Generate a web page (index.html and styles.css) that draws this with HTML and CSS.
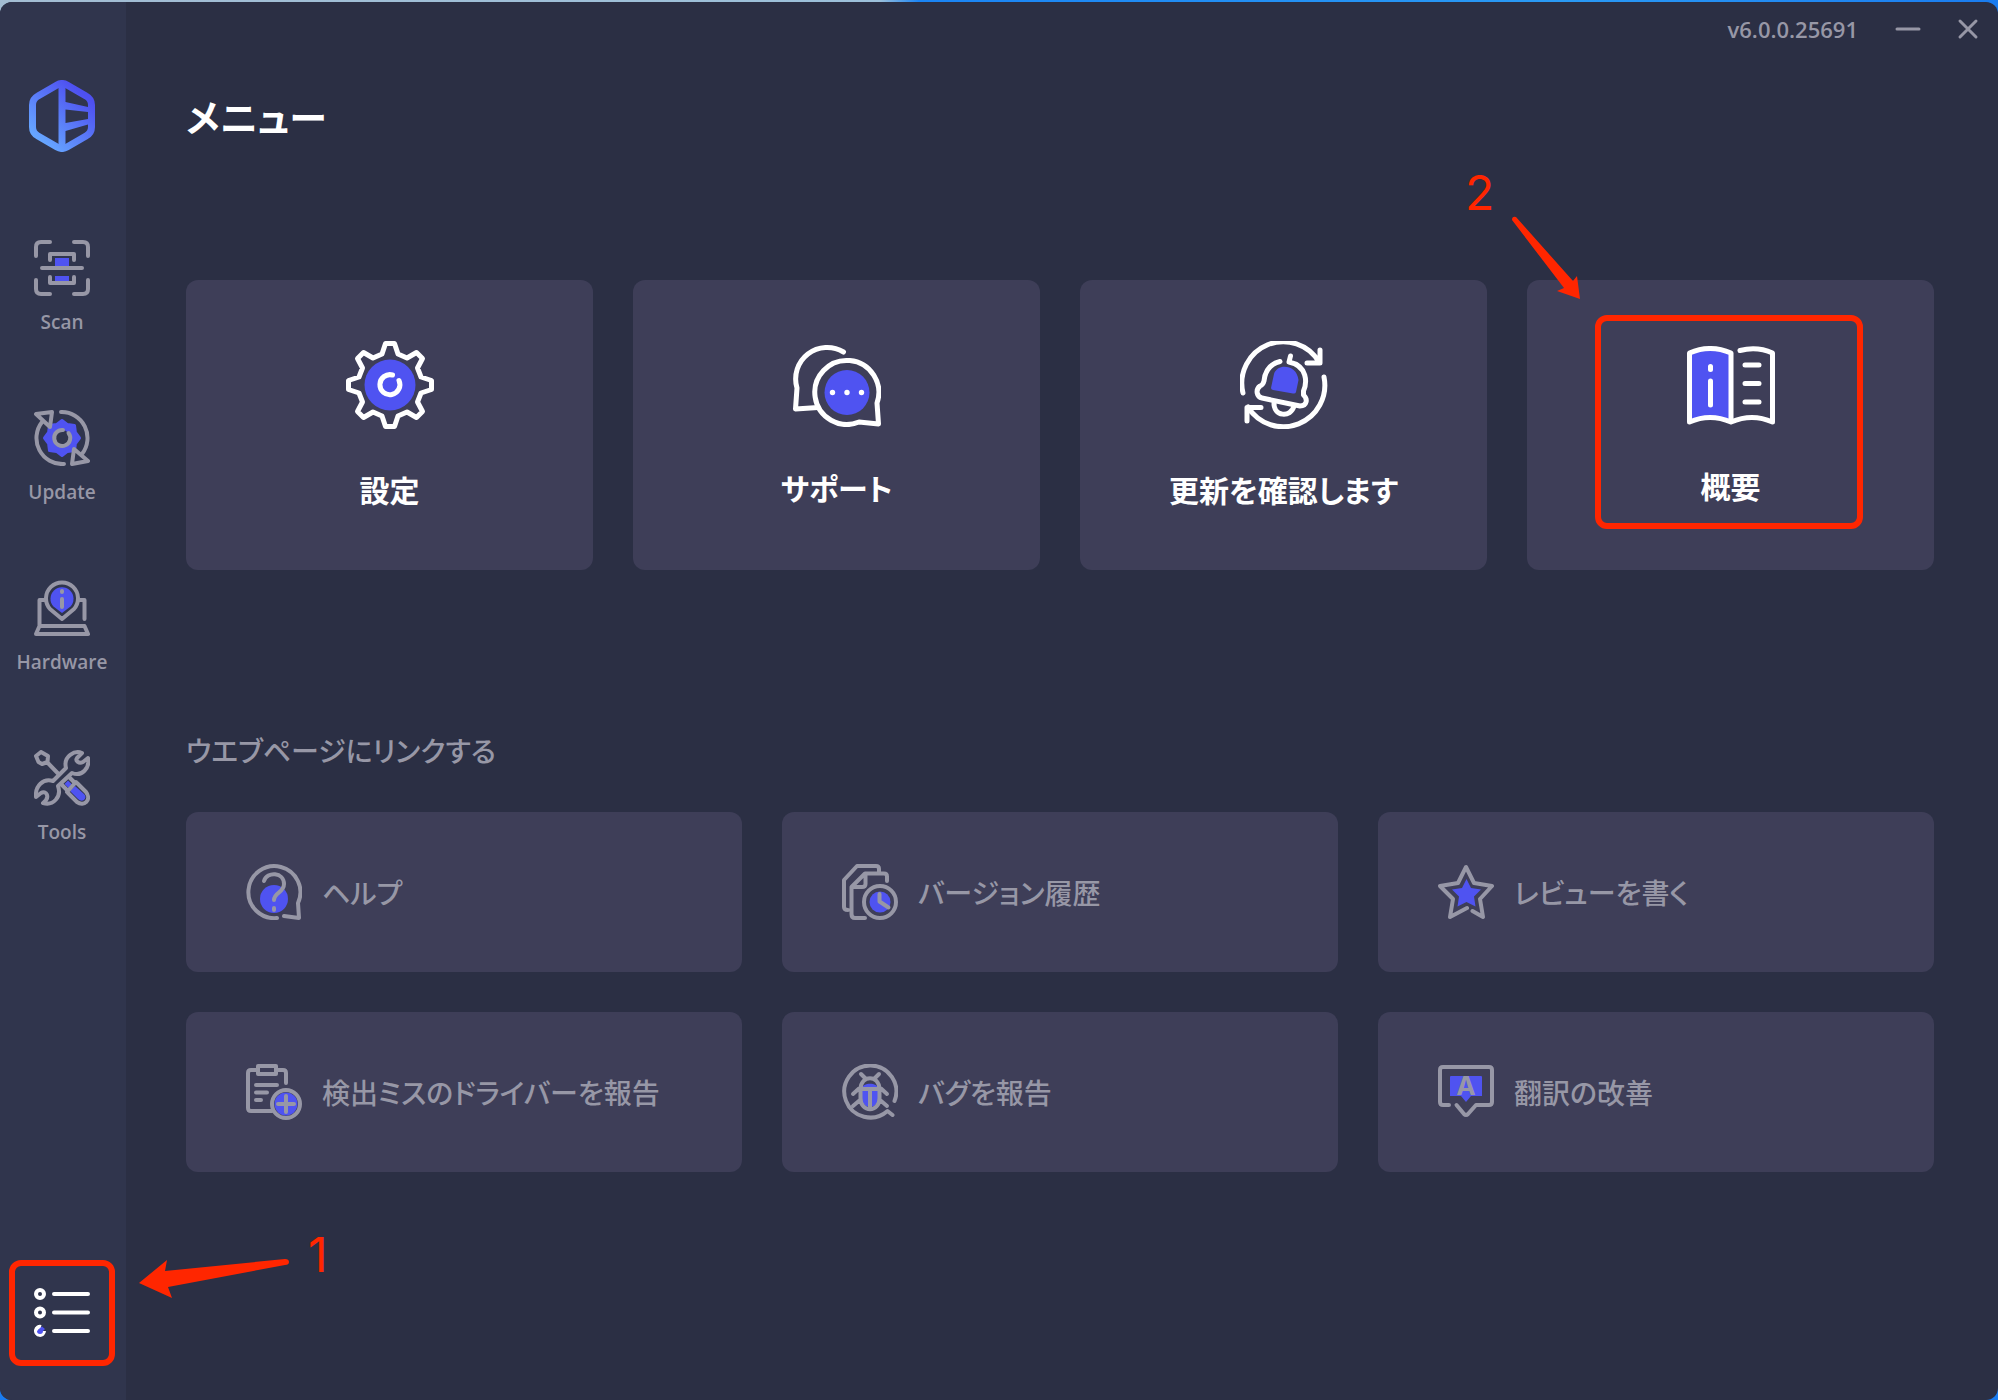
FILE: index.html
```html
<!DOCTYPE html>
<html lang="ja">
<head>
  <meta charset="UTF-8">
  <title>メニュー</title>
  <link rel="stylesheet" href="styles.css">
</head>
<body>
  <div class="window">
    <aside class="sidebar">
      <svg class="logo" viewBox="0 0 66 72">
        <defs>
          <linearGradient id="logo-fill" gradientUnits="userSpaceOnUse" x1="12" y1="60" x2="54" y2="14">
            <stop offset="0" stop-color="#66a5ff"/>
            <stop offset="1" stop-color="#4e50f0"/>
          </linearGradient>
        </defs>
        <path d="M28 5Q33 2 38 5L57 16Q62.500 19 62.500 25V47Q62.500 53 57 56L38 67Q33 70 28 67L9 56Q3.500 53 3.500 47V25Q3.500 19 9 16Z" fill="none" stroke="url(#logo-fill)" stroke-width="7"/>
        <path d="M29.500 4H36.500V22L59 27V32L36.500 29.500V43L59 39V44.500L36.500 51V68H29.500Z" fill="url(#logo-fill)"/>
      </svg>

      <nav class="nav">
        <a class="nav-item" href="#scan">
          <svg class="icon" viewBox="0 0 56 56">
            <path class="fill" d="M21 18H35V27H21ZM21 36H35V42H21Z"/>
            <path d="M2 16V7Q2 2 7 2H16M40 2H49Q54 2 54 7V16M2 40V49Q2 54 7 54H16M40 54H49Q54 54 54 49V40M16 20V14H40V20M16 37V43H40V37M8 28H48"/>
          </svg>
          <span>Scan</span>
        </a>
        <a class="nav-item" href="#update">
          <svg class="icon" viewBox="0 0 56 56">
            <path class="gear" d="M28 10.500L33.500 14.600L40.500 15.500L41.400 22.500L45.500 28L41.400 33.500L40.500 40.500L33.500 41.400L28 45.500L22.500 41.400L15.500 40.500L14.600 33.500L10.500 28L14.600 22.500L15.500 15.500L22.500 14.600Z"/>
            <circle class="hole" cx="28" cy="28" r="8"/>
            <path d="M34.500 23A8 8 0 1 1 29 20"/>
            <path d="M27 2A26 26 0 0 1 48 44M30 54A26 26 0 0 1 8 12M2 4L18 2L16 17ZM40 39L54 51L38 54Z"/>
          </svg>
          <span>Update</span>
        </a>
        <a class="nav-item" href="#hardware">
          <svg class="icon" viewBox="0 0 56 56">
            <path class="fill" d="M28 33L19.500 26.500A11.500 11.500 0 1 1 36.500 26.500Z"/>
            <path d="M28 39L16 29A16 16 0 1 1 40 29ZM28 11V12M28 19V27M11 20H5.500V46M45 20H50.500V39M5.500 46H50.500L54 54H2Z"/>
          </svg>
          <span>Hardware</span>
        </a>
        <a class="nav-item" href="#tools">
          <svg class="icon" viewBox="0 0 56 56">
            <path class="fill" d="M30.500 34L34 30.500L38 34.500L34.500 38ZM36 41L41 36L50 44Q53 47 50 50Q47 52 44 49Z"/>
            <path d="M2 6L7 2L14 6L13.500 12L8 14L4.500 12ZM13 12L25 24.500"/>
            <path d="M48 3C41 0 29 6 32 18L19 31C9 28 1 36 2 47L7 43C12 40 17 47 9 53C19 56 28 47 24 36L38 23C48 27 56 18 54 8L49 12C45 14 41 11 43 8Z"/>
            <path d="M28 35L33 40M36 28L40 32M42 32L33 42M43 33L52 42C58 50 50 57 43 52L34 43"/>
          </svg>
          <span>Tools</span>
        </a>
      </nav>

      <div class="menu-slot">
        <button class="menu-button" aria-label="メニュー">
          <svg viewBox="0 0 56 50">
            <path class="ring" d="M10 43A4 4 0 1 1 7 39"/>
            <path class="fill" d="M6 43m-3 0a3 3 0 1 0 6 0L11 41L8 38.500L6 40Z"/>
            <circle class="ring" cx="6" cy="6" r="4"/>
            <circle class="ring" cx="6" cy="24.500" r="4"/>
            <path d="M20 6H54M20 24.500H54M20 43H54"/>
          </svg>
        </button>
        <svg class="arrow arrow-one" viewBox="0 0 152 42">
          <path d="M1 25L29 2L27 13L147 1Q151 1 151 4Q151 7 147 7L30 29L34 40Z"/>
        </svg>
        <span class="step step-one">1</span>
      </div>
    </aside>

    <main class="main">
      <header class="titlebar">
        <span class="version">v6.0.0.25691</span>
        <button class="window-button" aria-label="最小化">
          <svg viewBox="0 0 26 26"><path d="M2 13H24"/></svg>
        </button>
        <button class="window-button" aria-label="閉じる">
          <svg viewBox="0 0 26 26"><path d="M5 5L21 21M21 5L5 21"/></svg>
        </button>
      </header>

      <h1>メニュー</h1>

      <div class="tiles">
        <button class="tile">
          <svg class="icon-88" viewBox="0 0 88 88">
            <circle class="fill" cx="44" cy="44" r="25.500"/>
            <path d="M39.500 2.500H48.500L52 13L61 17L70.500 11.500L76.500 17.500L71.500 27L75 36L85.500 39.500V48.500L75 52L71.500 61L76.500 70.500L70.500 76.500L61 71L52 75L48.500 85.500H39.500L36 75L27 71L17.500 76.500L11.500 70.500L16.500 61L13 52L2.500 48.500V39.500L13 36L16.500 27L11.500 17.500L17.500 11.500L27 17L36 13Z"/>
            <path d="M53 39.500A10 10 0 1 1 46.500 34"/>
          </svg>
          <span>設定</span>
        </button>
        <button class="tile">
          <svg class="icon-88" viewBox="0 0 88 83">
            <circle class="fill" cx="54" cy="48.500" r="22.500"/>
            <path d="M84 59L85.500 80L66 78A32 32 0 1 1 84 59Z"/>
            <path d="M50.500 8A31.500 31.500 0 0 0 4 44L2.500 65L25 63.500"/>
            <g class="dots"><circle cx="39.500" cy="48.500" r="2.700"/><circle cx="54" cy="48.500" r="2.700"/><circle cx="68.500" cy="48.500" r="2.700"/></g>
          </svg>
          <span>サポート</span>
        </button>
        <button class="tile">
          <svg class="icon-88" viewBox="0 0 88 88">
            <path class="fill" d="M31 47L34 33C37 22 57 23 58.500 39L56 51Q55.500 53 53 52.500L33 49Q31 48.500 31 47Z"/>
            <path d="M3 52A41.500 41.500 0 0 1 79 21M80 9V22H67M84 36A41.500 41.500 0 0 1 8 66M7 80V66.500H21"/>
            <path d="M40 20.500C30 23 25 30 24 40Q23 44 20 45C15 49 17 56 22 57L60 65C67 65 68 58 63.500 54V50C67 42 68 25 49 21L50.500 15"/>
            <path d="M34 61C33 76 51 77 54 65"/>
          </svg>
          <span>更新を確認します</span>
        </button>
        <div class="tile-slot">
          <button class="tile">
            <svg class="icon-88" viewBox="0 0 88 79">
              <path class="fill" d="M3 7Q23 -2 44 7V76Q23 66 3 76Z"/>
              <path d="M44 7Q23 -2 2.500 7V76Q23 67 44 76ZM53 4.500Q70 0 85.500 7V76Q65 67 44 76M23.500 20.500V23.500M23.500 35V59M58 19H72M58 37.500H72M58 56H72"/>
            </svg>
            <span>概要</span>
          </button>
          <div class="highlight"></div>
          <svg class="arrow arrow-two" viewBox="0 0 70 84">
            <path d="M1 4Q1 0 5 1L62 65L66 60L69 83L46 75L53 72Z"/>
          </svg>
          <span class="step step-two">2</span>
        </div>
      </div>

      <h2>ウエブページにリンクする</h2>

      <div class="links">
        <a class="link" href="#help">
          <svg class="icon" viewBox="0 0 56 56">
            <circle class="fill" cx="28" cy="35" r="14"/>
            <path d="M31 54A26 26 0 1 1 52 39L53 54L38 52"/>
            <path d="M18 17C21 7 38 8 38 20C38 29 28 28 28 36M28 44V46"/>
          </svg>
          <span>ヘルプ</span>
        </a>
        <a class="link" href="#history">
          <svg class="icon" viewBox="0 0 56 56">
            <circle class="fill" cx="38" cy="38" r="10.500"/>
            <path d="M6 46Q2 46 2 43V16L15 2H34Q37 2 37 5V8M23 54H13Q9.500 54 9.500 50V23L23 9.500H42Q45 9.500 45 12.500V17M23.500 10V20Q23.500 23 20 23H10"/>
            <circle cx="38" cy="38" r="16"/>
            <path d="M37.500 30V37.500L46.500 43.500"/>
          </svg>
          <span>バージョン履歴</span>
        </a>
        <a class="link" href="#review">
          <svg class="icon" viewBox="0 0 56 56">
            <path class="fill" d="M28.500 15L33 24L43 25.500L36 32.500L37.500 42.500L28.500 38L19.500 42.500L21 32.500L14 25.500L24 24Z"/>
            <path d="M34.500 47L45 53L42 35L54 22L36 19L28 3L20 19L2 22L15 35L12 53L29 44"/>
          </svg>
          <span>レビューを書く</span>
        </a>
        <a class="link" href="#driver">
          <svg class="icon" viewBox="0 0 56 56">
            <circle class="fill" cx="40" cy="40" r="11.500"/>
            <path d="M12 6H5Q2 6 2 9V44Q2 47 5 47H26M30 6H37Q40 6 40 9V19M12 2H30V10H12ZM10 21H31M10 28.500H21M10 36H15"/>
            <circle cx="40" cy="40" r="14"/>
            <path d="M40 32V48M32 40H48"/>
          </svg>
          <span>検出ミスのドライバーを報告</span>
        </a>
        <a class="link" href="#bug">
          <svg class="icon" viewBox="0 0 56 56">
            <path class="fill" d="M20 25C20 18 36 18 36 25V34C36 46 20 46 20 34Z"/>
            <path d="M52.500 37A26 26 0 1 0 45.500 47L50.500 51"/>
            <path d="M18.500 25C19 10.500 37 10.500 37.500 25V34C37.500 49 18.500 49 18.500 34ZM19 25H37M28 25V44M19 10L23 14M37 10L33 14M17 24.500L11 30M39 24.500L45 30M18 36L11 42M38 36L45 42"/>
          </svg>
          <span>バグを報告</span>
        </a>
        <a class="link" href="#translate">
          <svg class="icon" viewBox="0 0 56 56">
            <path class="fill" d="M13 12H43Q44 12 44 13V32H33L28 38L23 32H12V13Q12 12 13 12Z"/>
            <path d="M11 41H5Q2 41 2 38V6Q2 3 5 3H51Q54 3 54 6V38Q54 41 51 41H38L30 50Q28 52 26 50L18.500 41"/>
            <text x="28" y="31">A</text>
          </svg>
          <span>翻訳の改善</span>
        </a>
      </div>
    </main>
  </div>
</body>
</html>
```

FILE: styles.css
```css
* {
  box-sizing: border-box;
}
body {
  margin: 0;
  padding-top: 2px;
  min-height: 100vh;
  display: flex;
  background: linear-gradient(to right, #a3bdd3, #9cc0da 44%, #1a84f5 46%, #2a9af5 78%, #1a7cf0) top / 100% 20px no-repeat #1a7cf0;
  font-family: "Noto Sans CJK JP", sans-serif;
  font-feature-settings: "palt";
  color: #9797a6;
}
button {
  padding: 0;
  border: none;
  background: none;
  font: inherit;
  font-feature-settings: inherit;
  color: inherit;
  cursor: pointer;
}
a {
  color: inherit;
  text-decoration: none;
}
svg {
  display: block;
  fill: none;
  stroke: currentColor;
  stroke-width: 4;
  stroke-linecap: round;
  stroke-linejoin: round;
}
.fill {
  fill: #4f53f1;
  stroke: none;
}
.window {
  flex: 1;
  display: flex;
  border-radius: 12px;
  overflow: hidden;
  background-color: #2b2f44;
}

/* sidebar */
.sidebar {
  width: 126px;
  flex-shrink: 0;
  padding: 78px 2px 34px 0;
  display: flex;
  flex-direction: column;
  align-items: center;
  background-color: #30354d;
}
.logo {
  width: 66px;
  stroke: none;
}
.nav {
  margin-top: 88px;
  display: flex;
  flex-direction: column;
  gap: 74px;
}
.nav-item {
  display: flex;
  flex-direction: column;
  align-items: center;
  gap: 12px;
  font-family: "Open Sans", sans-serif;
  font-size: 19px;
  font-weight: 600;
  line-height: 28px;
}
.icon {
  width: 56px;
  height: 56px;
  flex-shrink: 0;
}
.gear {
  fill: #4f53f1;
  stroke: #4f53f1;
  stroke-width: 3;
}
.hole {
  fill: #30354d;
  stroke: none;
}
.menu-slot {
  position: relative;
  margin-top: auto;
}
.menu-button {
  display: grid;
  place-items: center;
  width: 106px;
  height: 106px;
  border: 6px solid #ff2600;
  border-radius: 12px;
  color: #fff;
}
.menu-button svg {
  width: 56px;
}
.ring {
  stroke-linecap: butt;
}

/* step marks */
.arrow {
  position: absolute;
  fill: #ff2600;
  stroke: none;
}
.arrow-one {
  left: 129px;
  top: -2px;
  width: 152px;
}
.arrow-two {
  left: -16px;
  top: -64px;
  width: 70px;
}
.step {
  position: absolute;
  font-family: Inter, sans-serif;
  font-size: 48px;
  line-height: 48px;
  color: #ff2600;
}
.step-one {
  left: 299px;
  top: -29px;
}
.step-two {
  left: -62px;
  top: -111px;
}
.highlight {
  position: absolute;
  inset: 35px 71px 41px 68px;
  border: 6px solid #ff2600;
  border-radius: 12px;
  pointer-events: none;
}

/* main */
.main {
  flex: 1;
  padding: 0 64px 64px 60px;
}
.titlebar {
  display: flex;
  justify-content: flex-end;
  align-items: center;
  height: 54px;
  margin-right: -64px;
}
.version {
  font-family: "Open Sans", sans-serif;
  font-size: 22px;
  font-weight: 600;
}
.window-button {
  width: 60px;
  height: 40px;
  display: grid;
  place-items: center;
}
.version + .window-button {
  margin-left: 20px;
}
.window-button svg {
  width: 26px;
  stroke-width: 3;
}
h1 {
  margin: 32px 0 136px;
  font-size: 38px;
  font-weight: bold;
  line-height: 56px;
  color: #fff;
}
.tiles {
  display: grid;
  grid-template-columns: repeat(4, 1fr);
  gap: 40px;
}
.tile-slot {
  position: relative;
}
.tile {
  width: 100%;
  height: 290px;
  display: flex;
  flex-direction: column;
  justify-content: center;
  align-items: center;
  gap: 40px;
  border-radius: 12px;
  background-color: #3e3e58;
  font-size: 30px;
  font-weight: bold;
  line-height: 40px;
  color: #fff;
}
.icon-88 {
  width: 88px;
  stroke-width: 5;
}
.dots {
  fill: #fff;
  stroke: none;
}
h2 {
  margin: 160px 0 42px;
  font-size: 28px;
  font-weight: 500;
  line-height: 40px;
}
.links {
  display: grid;
  grid-template-columns: repeat(3, 1fr);
  gap: 40px;
}
.link {
  height: 160px;
  padding: 0 60px;
  display: flex;
  align-items: center;
  gap: 20px;
  border-radius: 12px;
  background-color: #3e3e58;
  font-size: 28px;
  font-weight: 500;
  line-height: 40px;
}
.link text {
  fill: currentColor;
  stroke: none;
  font-family: Inter, sans-serif;
  font-size: 26px;
  font-weight: bold;
  text-anchor: middle;
}
```
